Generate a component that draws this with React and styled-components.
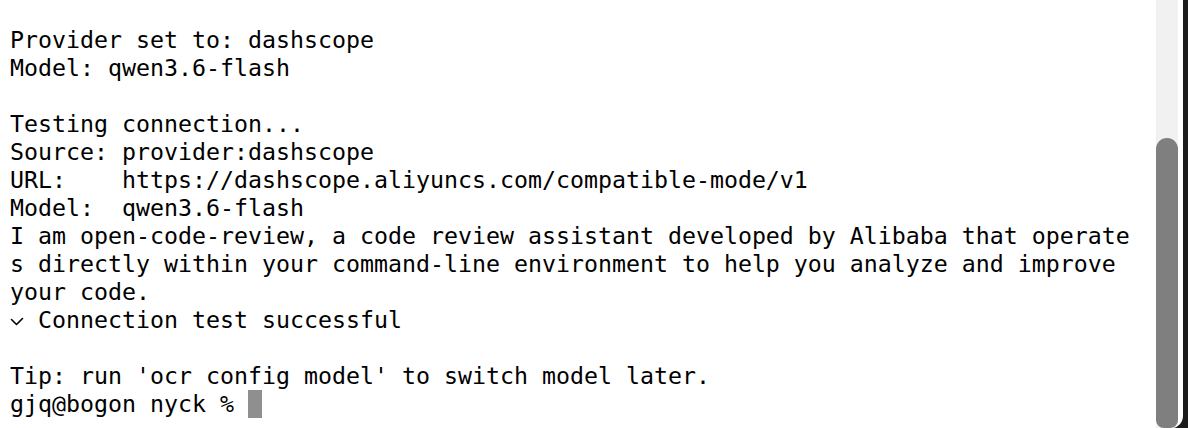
import React from "react";
import styled, { createGlobalStyle } from "styled-components";

const GlobalStyle = createGlobalStyle`
  html, body {
    margin: 0;
    padding: 0;
    background: #1c1c1c;
    overflow: hidden;
  }
`;

const Frame = styled.div`
  width: 1188px;
  height: 428px;
  background: #1c1c1c;
  overflow: hidden;
`;

const Window = styled.div`
  width: 1183px;
  height: 428px;
  display: flex;
  background: #ffffff;
  border-bottom-right-radius: 12px;
  overflow: hidden;
`;

const Terminal = styled.pre`
  flex: 1;
  margin: 0;
  padding: 26px 0 0 10px;
  font-family: "DejaVu Sans Mono", "Liberation Mono", monospace;
  font-size: 23.25px;
  line-height: 28px;
  color: #000000;
  white-space: pre;
`;

const Line = styled.div`
  height: 28px;
`;

const Check = styled.svg`
  width: 14px;
  height: 28px;
  vertical-align: top;
`;

const Cursor = styled.span`
  display: inline-block;
  width: 14px;
  height: 28px;
  vertical-align: top;
  background: #8f8f8f;
`;

const Track = styled.div`
  width: 22px;
  margin-right: 5px;
  display: flex;
  flex-direction: column;
  background: #f1f1f1;
`;

const Thumb = styled.div`
  margin-top: 138px;
  flex: 1;
  border-radius: 11px 11px 8px 8px;
  background: #7f7f7f;
`;

const lines = [
  "Provider set to: dashscope",
  "Model: qwen3.6-flash",
  "",
  "Testing connection...",
  "Source: provider:dashscope",
  "URL:    https://dashscope.aliyuncs.com/compatible-mode/v1",
  "Model:  qwen3.6-flash",
  "I am open-code-review, a code review assistant developed by Alibaba that operate",
  "s directly within your command-line environment to help you analyze and improve",
  "your code.",
];

export default function App() {
  return (
    <>
      <GlobalStyle />
      <Frame>
        <Window>
          <Terminal>
            {lines.map((text, i) => (
              <Line key={i}>{text}</Line>
            ))}
            <Line>
              <Check viewBox="0 0 14 28">
                <polyline
                  points="1.5,13.5 6.5,18.5 12.5,12.5"
                  fill="none"
                  stroke="#000"
                  strokeWidth="1.6"
                  strokeLinecap="round"
                  strokeLinejoin="round"
                />
              </Check>
              {" Connection test successful"}
            </Line>
            <Line />
            <Line>Tip: run 'ocr config model' to switch model later.</Line>
            <Line>
              gjq@bogon nyck % <Cursor />
            </Line>
          </Terminal>
          <Track>
            <Thumb />
          </Track>
        </Window>
      </Frame>
    </>
  );
}
